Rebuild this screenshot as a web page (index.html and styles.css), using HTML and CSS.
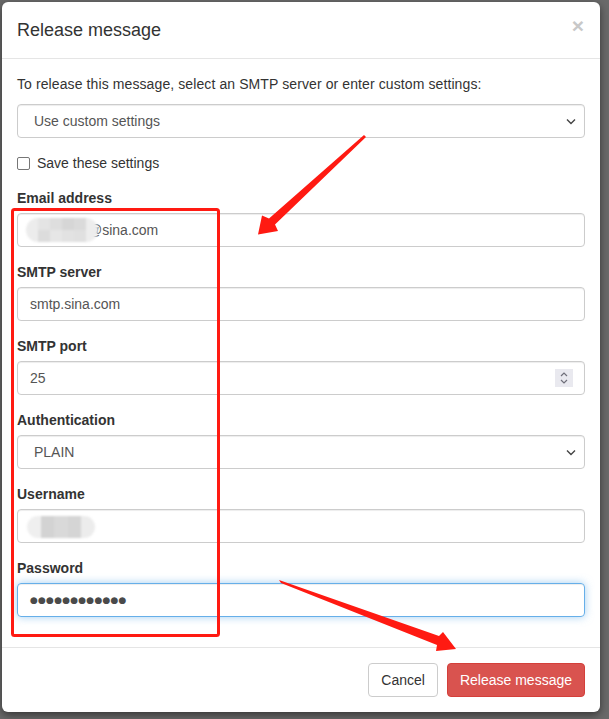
FILE: index.html
```html
<!DOCTYPE html>
<html>
<head>
<meta charset="utf-8">
<link rel="stylesheet" href="styles.css">
</head>
<body>
<div class="modal">
  <div class="modal-header">
    <h4 class="title">Release message</h4>
    <span class="close">&times;</span>
  </div>
  <div class="modal-body">
    <p class="intro">To release this message, select an SMTP server or enter custom settings:</p>
    <div class="control select">
      <span class="value">Use custom settings</span>
      <svg class="chev" width="10" height="7" viewBox="0 0 10 7"><path d="M1 1.5 L5 5.5 L9 1.5" fill="none" stroke="#444" stroke-width="1.4"/></svg>
    </div>
    <div class="checkbox">
      <span class="box"></span>
      <span>Save these settings</span>
    </div>
    <div class="group">
      <div class="label">Email address</div>
      <div class="control">
        <span class="mosaic mosaic-email"><i></i><i></i><i></i><i></i><i></i><i></i></span>
        <span class="value email-text">@sina.com</span>
      </div>
    </div>
    <div class="group">
      <div class="label">SMTP server</div>
      <div class="control"><span class="value">smtp.sina.com</span></div>
    </div>
    <div class="group">
      <div class="label">SMTP port</div>
      <div class="control">
        <span class="value">25</span>
        <span class="spinner">
          <svg width="10" height="14" viewBox="0 0 10 14"><path d="M2 5 L5 2 L8 5 M2 9 L5 12 L8 9" fill="none" stroke="#6f6f7a" stroke-width="1.2"/></svg>
        </span>
      </div>
    </div>
    <div class="group">
      <div class="label">Authentication</div>
      <div class="control select">
        <span class="value">PLAIN</span>
        <svg class="chev" width="10" height="7" viewBox="0 0 10 7"><path d="M1 1.5 L5 5.5 L9 1.5" fill="none" stroke="#444" stroke-width="1.4"/></svg>
      </div>
    </div>
    <div class="group">
      <div class="label">Username</div>
      <div class="control">
        <span class="mosaic mosaic-user"><i></i><i></i><i></i><i></i><i></i></span>
      </div>
    </div>
    <div class="group">
      <div class="label">Password</div>
      <div class="control focus"><span class="value dots">●●●●●●●●●●●●</span></div>
    </div>
  </div>
  <div class="modal-footer">
    <button class="btn btn-default">Cancel</button>
    <button class="btn btn-danger">Release message</button>
  </div>
</div>
<svg class="annot" width="609" height="719" viewBox="0 0 609 719">
  <rect x="12.5" y="209.5" width="206" height="426" rx="2" fill="none" stroke="#ff1a12" stroke-width="3"/>
  <polygon points="366,137 275,224.5 278,231 258,234.5 262,215.5 269,218.5 364,135" fill="#ff1a12"/>
  <polygon points="279,580 439,636 443,632 456,649 436,651 437,645 281,583" fill="#ff1a12"/>
</svg>
</body>
</html>
```
FILE: styles.css
```css
html, body {
  margin: 0;
  padding: 0;
}
body {
  background: #6a6a6a;
  font-family: "Liberation Sans", Arial, sans-serif;
  font-size: 14px;
  line-height: 20px;
  color: #333;
  padding: 2px;
  width: 609px;
  height: 719px;
  box-sizing: border-box;
  overflow: hidden;
}
.modal {
  width: 598px;
  background: #fff;
  border-radius: 6px;
  box-shadow: 0 3px 9px rgba(0,0,0,0.5);
}
.modal-header {
  display: flex;
  align-items: center;
  padding: 15px;
  height: 26px;
  border-bottom: 1px solid #e5e5e5;
}
.title {
  margin: 0;
  font-size: 18px;
  font-weight: normal;
  line-height: 26px;
  flex: 1;
}
.close {
  font-size: 21px;
  font-weight: bold;
  color: #c8c8c8;
  line-height: 20px;
  margin-top: -9px;
  margin-right: 1px;
}
.modal-body {
  padding: 15px;
}
.intro {
  margin: 0 0 10px 0;
  letter-spacing: 0.1px;
}
.control {
  height: 34px;
  box-sizing: border-box;
  border: 1px solid #ccc;
  border-radius: 4px;
  padding: 0 12px;
  display: flex;
  align-items: center;
  color: #555;
  box-shadow: inset 0 1px 1px rgba(0,0,0,0.075);
}
.select .value {
  padding-left: 4px;
}
.chev {
  margin-left: auto;
  margin-right: -4px;
}
.checkbox {
  display: flex;
  align-items: center;
  gap: 7px;
  margin: 15px 0;
}
.box {
  width: 11px;
  height: 11px;
  border: 1px solid #767676;
  border-radius: 2px;
  background: #fff;
}
.group {
  margin-bottom: 15px;
}
.label {
  font-weight: bold;
  margin-bottom: 5px;
}
.spinner {
  margin-left: auto;
  margin-right: -1px;
  width: 18px;
  height: 18px;
  background: #e9e9ef;
  display: flex;
  align-items: center;
  justify-content: center;
}
.mosaic {
  display: flex;
  height: 24px;
  filter: blur(1.2px);
  border-radius: 12px;
  overflow: hidden;
  position: relative;
  z-index: 1;
}
.mosaic i {
  display: block;
  width: 12px;
  height: 24px;
}
.mosaic-email {
  margin-left: -4px;
  width: 72px;
}
.email-text {
  margin-left: -10px;
}
.mosaic-email i:nth-child(1) { background: #ececec; }
.mosaic-email i:nth-child(2) { background: linear-gradient(#e4e4e4 50%, #dcdcdc 50%); }
.mosaic-email i:nth-child(3) { background: linear-gradient(#dedede 50%, #e6e6e6 50%); }
.mosaic-email i:nth-child(4) { background: linear-gradient(#d6d6d6 50%, #e2e2e2 50%); }
.mosaic-email i:nth-child(5) { background: linear-gradient(#dadada 50%, #e0e0e0 50%); }
.mosaic-email i:nth-child(6) { background: #ededed; }
.mosaic-user {
  margin-left: -3px;
  width: 68px;
  height: 22px;
  margin-top: 2px;
}
.mosaic-user i { height: 22px; width: 14px; }
.mosaic-user i:nth-child(1) { background: #efefef; }
.mosaic-user i:nth-child(2) { background: #d3d3d3; }
.mosaic-user i:nth-child(3) { background: #d9d9d9; }
.mosaic-user i:nth-child(4) { background: #d5d5d5; }
.mosaic-user i:nth-child(5) { background: #ececec; }
.focus {
  border-color: #66afe9;
  box-shadow: inset 0 1px 1px rgba(0,0,0,0.075), 0 0 8px rgba(102,175,233,0.6);
}
.dots {
  font-family: "DejaVu Sans", sans-serif;
  font-size: 9px;
  letter-spacing: 0.2px;
  color: #4a4a4a;
}
.modal-footer {
  border-top: 1px solid #e5e5e5;
  padding: 15px;
  display: flex;
  justify-content: flex-end;
  gap: 9px;
}
.btn {
  height: 34px;
  box-sizing: border-box;
  padding: 6px 12px;
  font-family: "Liberation Sans", Arial, sans-serif;
  font-size: 14px;
  line-height: 20px;
  border-radius: 4px;
  border: 1px solid #ccc;
  background: #fff;
  color: #333;
}
.btn-danger {
  background: #d9534f;
  border-color: #d43f3a;
  color: #fff;
}
.annot {
  position: absolute;
  left: 0;
  top: 0;
  pointer-events: none;
}
```
